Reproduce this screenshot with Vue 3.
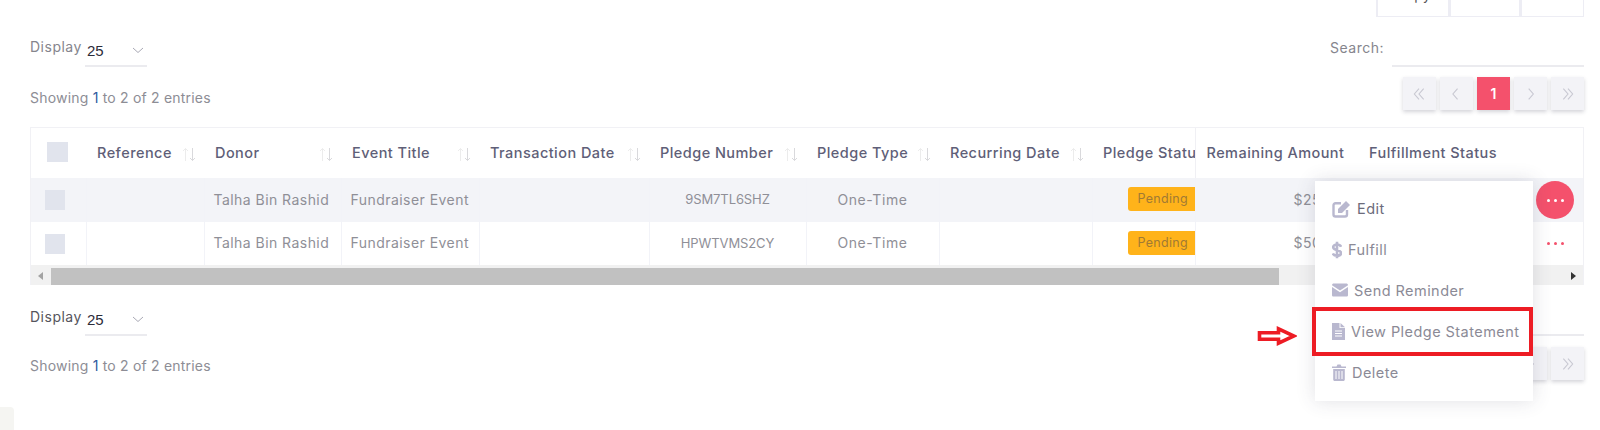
<script setup>
const cols = [55, 118, 137, 138, 170, 157, 133, 153, 103, 163, 168, 59]
const headers = [
  { label: '', sort: false },
  { label: 'Reference', sort: true },
  { label: 'Donor', sort: true },
  { label: 'Event Title', sort: true },
  { label: 'Transaction Date', sort: true },
  { label: 'Pledge Number', sort: true },
  { label: 'Pledge Type', sort: true },
  { label: 'Recurring Date', sort: true },
  { label: 'Pledge Status', sort: false, edge: true },
  { label: 'Remaining Amount', sort: false },
  { label: 'Fulfillment Status', sort: false },
  { label: '', sort: false },
]
const rows = [
  { number: '9SM7TL6SHZ', amount: '$25.00', open: true },
  { number: 'HPWTVMS2CY', amount: '$50.00', open: false },
]
const pages = ['first', 'prev', '1', 'next', 'last']
const chevrons = {
  first: 'M9 2 3 9l6 7M15 2 9 9l6 7',
  prev: 'M11 2 5 9l6 7',
  next: 'M6 2l6 7-6 7',
  last: 'M3 2l6 7-6 7M9 2l6 7-6 7',
}
</script>

<template>
  <div class="page">
    <div class="top-buttons">
      <div class="top-btn copy"><span>Copy</span></div>
      <div class="top-btn mid"></div>
      <div class="top-btn last"></div>
    </div>

    <div class="filter-row">
      <div class="length">
        <span class="length-label">Display</span>
        <div class="fake-select">
          <span>25</span>
          <svg width="12" height="7" viewBox="0 0 12 7"><path d="M1 1l5 4.500L11 1" fill="none" stroke="#a9a9b5" /></svg>
        </div>
      </div>
      <div class="search">
        <span>Search:</span>
        <div class="search-input"></div>
      </div>
    </div>

    <div class="info-row">
      <div class="info">Showing <b>1</b> to 2 of 2 entries</div>
      <div class="pager">
        <div v-for="p in pages" :key="p" class="page-btn" :class="{ current: p === '1' }">
          <template v-if="p === '1'">1</template>
          <svg v-else width="14" height="14" viewBox="0 0 18 18"><path :d="chevrons[p]" fill="none" stroke="#c8c8d2" stroke-width="1.4" /></svg>
        </div>
      </div>
    </div>

    <div class="table-wrap">
      <table>
        <colgroup>
          <col v-for="(w, i) in cols" :key="i" :style="{ width: w + 'px' }" />
        </colgroup>
        <thead>
          <tr>
            <th v-for="(h, i) in headers" :key="i" :class="{ edge: h.edge }">
              <span v-if="i === 0" class="check head-check"></span>
              <div v-else class="th-inner">
                <span class="th-label">{{ h.label }}</span>
                <svg v-if="h.sort" class="sort" width="14" height="15" viewBox="0 0 14 15">
                  <path d="M3.500 14V1.500M1 4l2.500-2.500L6 4" fill="none" stroke="#ececec" />
                  <path d="M10.500 1v12.500M8 11l2.500 2.500L13 11" fill="none" stroke="#d9d9dc" />
                </svg>
              </div>
            </th>
          </tr>
        </thead>
        <tbody>
          <tr v-for="row in rows" :key="row.number" :class="{ striped: row.open }">
            <td class="check-cell"><span class="check"></span></td>
            <td></td>
            <td class="txt name">Talha Bin Rashid</td>
            <td class="txt event">Fundraiser Event</td>
            <td></td>
            <td class="txt code">{{ row.number }}</td>
            <td class="txt type">One-Time</td>
            <td></td>
            <td class="txt status"><span class="badge">Pending</span></td>
            <td class="txt amount">{{ row.amount }}</td>
            <td class="plain"></td>
            <td class="plain action">
              <div class="dots" :class="{ open: row.open }"><i></i><i></i><i></i></div>
            </td>
          </tr>
        </tbody>
      </table>
      <div class="scrollbar">
        <span class="arrow left"></span>
        <div class="thumb"></div>
        <span class="arrow right"></span>
      </div>
    </div>

    <div class="filter-row lower">
      <div class="length">
        <span class="length-label dark">Display</span>
        <div class="fake-select">
          <span>25</span>
          <svg width="12" height="7" viewBox="0 0 12 7"><path d="M1 1l5 4.500L11 1" fill="none" stroke="#a9a9b5" /></svg>
        </div>
      </div>
      <div class="search">
        <div class="search-input"></div>
      </div>
    </div>

    <div class="info-row lower-info">
      <div class="info">Showing <b>1</b> to 2 of 2 entries</div>
      <div class="pager">
        <div v-for="p in pages" :key="p" class="page-btn" :class="{ current: p === '1' }">
          <template v-if="p === '1'">1</template>
          <svg v-else width="14" height="14" viewBox="0 0 18 18"><path :d="chevrons[p]" fill="none" stroke="#c8c8d2" stroke-width="1.4" /></svg>
        </div>
      </div>
    </div>

    <!-- dropdown menu opened from the first row -->
    <div class="menu">
      <div class="menu-item first">
        <svg width="19" height="18" viewBox="0 0 19 18">
          <path d="M9 3.200H3.500A2 2 0 0 0 1.500 5.200v9.300a2 2 0 0 0 2 2H13a2 2 0 0 0 2-2V10" fill="none" stroke="#b9b8cf" stroke-width="2.400" />
          <path d="M6 9 14 1l4 4-8 8H6z" fill="#b9b8cf" />
        </svg>
        <span>Edit</span>
      </div>
      <div class="menu-item">
        <svg width="10" height="18" viewBox="0 0 10 18">
          <path d="M9 5.800C8.500 4.200 7 3.500 5 3.500c-2.200 0-3.800 1-3.800 2.700C1.200 10 9 8 9 12c0 1.700-1.800 2.700-4 2.700-2.300 0-3.600-.8-4.200-2.200M5 .8v16.400" fill="none" stroke="#b9b8cf" stroke-width="2.600" />
        </svg>
        <span>Fulfill</span>
      </div>
      <div class="menu-item">
        <svg width="16" height="14" viewBox="0 0 16 14">
          <path d="M0 2.200C0 1 .8.500 1.800.500h12.400C15.200.500 16 1 16 2.200L8 7.500z" fill="#b9b8cf" />
          <path d="M0 4v8.200c0 .8.700 1.300 1.500 1.300h13c.8 0 1.500-.5 1.500-1.300V4L8 9.300z" fill="#b9b8cf" />
        </svg>
        <span>Send Reminder</span>
      </div>
      <div class="menu-item">
        <svg width="13" height="17" viewBox="0 0 13 17">
          <path d="M0 0h7.500v5H13v12H0z" fill="#b9b8cf" />
          <path d="M8.500 0 13 4.200H8.500z" fill="#b9b8cf" />
          <path d="M3 8h7M3 10.500h7M3 13h7" stroke="#fff" />
        </svg>
        <span>View Pledge Statement</span>
      </div>
      <div class="menu-item">
        <svg width="14" height="17" viewBox="0 0 14 17">
          <path d="M0 2.500h14v1.500H0zM4.500 2.500 5.500.5h3l1 2" fill="#b9b8cf" />
          <path d="M1.200 5h11.600v10.500c0 .8-.6 1.500-1.400 1.500H2.600c-.8 0-1.400-.7-1.400-1.500z" fill="#b9b8cf" />
          <path d="M4 7v8M7 7v8M10 7v8" stroke="#fff" />
        </svg>
        <span>Delete</span>
      </div>
    </div>

    <!-- red annotation drawn over the screenshot -->
    <div class="mark-box"></div>
    <svg class="mark-arrow" width="40" height="20" viewBox="0 0 40 20">
      <path d="M2.500 6.800h19V2.800L37 10 21.500 17.200v-4h-19z" fill="#fff" stroke="#ed1c24" stroke-width="3.600" />
    </svg>

    <div class="corner"></div>
  </div>
</template>

<style scoped>
.page {
  position: relative;
  width: 1600px;
  height: 430px;
  box-sizing: border-box;
  padding: 0 16px 0 30px;
  overflow: hidden;
  background: #fff;
  font-family: Inter, "Open Sans", sans-serif;
  font-size: 14px;
  letter-spacing: 0.2px;
  color: #8f8f97;
}

.top-buttons {
  display: flex;
  justify-content: flex-end;
  height: 17px;
}
.top-btn {
  box-sizing: border-box;
  height: 17px;
  border: 1px solid #ededf4;
  border-top: 0;
  border-left-width: 2px;
  overflow: hidden;
}
.copy {
  width: 73px;
  color: #555;
  text-align: center;
}
.copy span {
  display: block;
  margin-top: -14px;
}
.mid {
  width: 71px;
  border-left: 2px solid #ededf4;
}
.last {
  width: 64px;
}

.filter-row {
  display: flex;
  justify-content: space-between;
  align-items: flex-end;
  height: 50px;
}
.length {
  display: flex;
  align-items: flex-start;
  gap: 3px;
}
.length-label {
  margin-top: 2px;
  color: #85858d;
  width: 52px;
  letter-spacing: 0.5px;
}
.length-label.dark {
  margin-top: 3px;
  color: #55555d;
}
.fake-select {
  box-sizing: border-box;
  width: 62px;
  height: 31px;
  display: flex;
  align-items: center;
  justify-content: space-between;
  padding: 0 3px 0 2px;
  border-bottom: 2px solid #ebebef;
  font-family: "Liberation Sans", sans-serif;
  font-size: 15px;
  letter-spacing: 0;
  color: #2c2c3a;
}
.search {
  display: flex;
  align-items: flex-end;
  gap: 8px;
  color: #85858d;
  letter-spacing: 0.5px;
}
.search span {
  padding-bottom: 11px;
}
.search-input {
  width: 192px;
  height: 31px;
  box-sizing: border-box;
  border-bottom: 2px solid #ebebef;
}

.info-row {
  display: flex;
  justify-content: space-between;
  align-items: flex-start;
  margin-top: 10px;
}
.info {
  margin-top: 12px;
  color: #8d8d95;
}
.info b {
  font-weight: 400;
  color: #2f5a9e;
}
.pager {
  display: flex;
  gap: 4.5px;
}
.page-btn {
  box-sizing: border-box;
  width: 32.6px;
  height: 33px;
  display: flex;
  align-items: center;
  justify-content: center;
  background: #f3f3f7;
  box-shadow: 0 2px 4px rgba(60, 60, 80, 0.22);
  color: #fff;
  font-weight: 600;
}
.page-btn.current {
  background: #f4516c;
}

.table-wrap {
  margin-top: 17px;
  border: 1px solid #f1f1f5;
  border-bottom: 0;
  overflow: hidden;
  height: 158px;
  box-sizing: border-box;
}
table {
  table-layout: fixed;
  width: 1553px;
  border-collapse: collapse;
  letter-spacing: 0.45px;
}
th {
  height: 50px;
  padding: 0;
  text-align: left;
  font-size: 14.5px;
  font-weight: 500;
  color: #5f5f78;
  white-space: nowrap;
  overflow: hidden;
}
th.edge {
  border-right: 1px solid #f0f0f4;
}
.th-inner {
  display: flex;
  justify-content: space-between;
  align-items: center;
  padding: 0 8px 0 11px;
}
.th-label {
  margin-top: -2px;
}
.th-inner .sort {
  flex: none;
  margin-top: 3px;
}
.check {
  display: block;
  width: 20px;
  height: 20px;
  background: #e1e4ed;
}
.head-check {
  margin: -3px 0 0 16px;
  width: 21px;
}
td {
  height: 44px;
  padding: 0;
  border-right: 1px solid #f2f3f8;
  white-space: nowrap;
  overflow: hidden;
}
tbody tr:nth-child(2) td {
  height: 43px;
}
.striped td {
  background: #f3f4f8;
}
td.txt {
  padding-bottom: 2px;
  box-sizing: border-box;
}
.check-cell .check {
  margin-left: 14px;
}
.name {
  padding-left: 9px;
}
.event {
  padding-left: 9px;
}
.code {
  text-align: center;
  font-size: 13px;
  letter-spacing: -0.1px;
}
.type {
  text-align: center;
  letter-spacing: 0.6px;
}
.status {
  padding-left: 35px;
}
.badge {
  display: inline-block;
  width: 85px;
  box-sizing: border-box;
  height: 24px;
  line-height: 24px;
  padding-left: 10px;
  border-radius: 3px;
  background: #ffb31a;
  color: #a17a34;
  font-size: 12.5px;
  letter-spacing: 0.3px;
}
.amount {
  padding-left: 98px;
  border-right: 0;
}
.plain {
  border-right: 0;
}
.dots {
  display: flex;
  align-items: center;
  justify-content: center;
  gap: 4px;
  width: 38px;
  height: 38px;
  margin-left: 10px;
  border-radius: 50%;
}
.dots i {
  width: 3px;
  height: 3px;
  border-radius: 50%;
  background: #f4516c;
}
.dots.open {
  background: #f4516c;
}
.dots.open i {
  background: #fff;
}

.scrollbar {
  display: flex;
  align-items: center;
  height: 20px;
  padding-top: 2px;
  box-sizing: border-box;
  background: #f1f1f1;
}
.arrow {
  width: 0;
  height: 0;
  border-top: 4px solid transparent;
  border-bottom: 4px solid transparent;
}
.arrow.left {
  margin: 0 8px 0 7px;
  border-right: 5px solid #a3a3a3;
}
.thumb {
  width: 1228px;
  height: 17px;
  background: #c1c1c1;
}
.arrow.right {
  margin-left: auto;
  margin-right: 7px;
  border-left: 5px solid #333;
}

.lower {
  height: 51px;
}
.lower-info {
  margin-top: 11px;
}
.lower-info .info {
  margin-top: 10px;
}

.menu {
  position: absolute;
  left: 1315px;
  top: 181px;
  width: 218px;
  height: 220px;
  box-sizing: border-box;
  padding-top: 7.5px;
  background: #fff;
  box-shadow: 0 0 18px rgba(60, 60, 90, 0.16);
  color: #8b8a96;
  font-size: 14.5px;
  letter-spacing: 0.45px;
}
.menu-item {
  display: flex;
  align-items: center;
  gap: 6px;
  height: 40.8px;
  padding-left: 17px;
}
.menu-item.first {
  color: #6c6b7b;
}
.mark-box {
  position: absolute;
  left: 1312px;
  top: 307px;
  width: 221px;
  height: 49px;
  box-sizing: border-box;
  border: 4px solid #ed1c24;
}
.mark-arrow {
  position: absolute;
  left: 1257px;
  top: 326px;
}
.corner {
  position: absolute;
  left: 0;
  top: 407px;
  width: 14px;
  height: 23px;
  background: #f5f5f2;
  border-top-right-radius: 4px;
}
</style>

<style>
html,
body {
  margin: 0;
  background: #fff;
}
</style>
